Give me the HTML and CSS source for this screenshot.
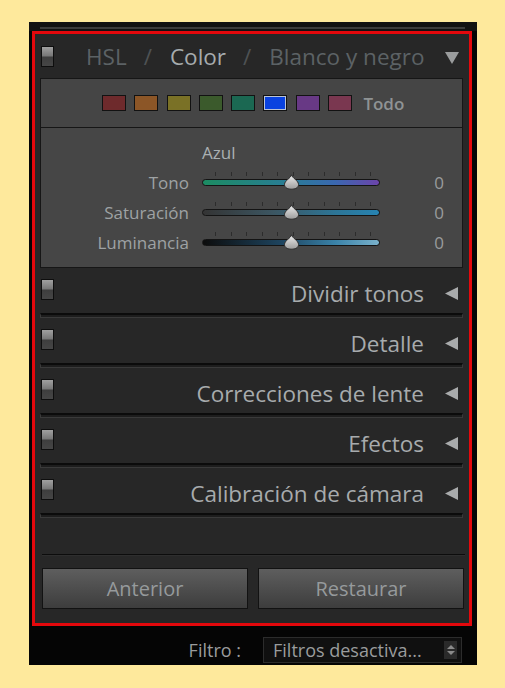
FILE: index.html
```html
<!DOCTYPE html>
<html lang="es">
<head>
<meta charset="utf-8">
<title>Lightroom panel</title>
<link rel="stylesheet" href="styles.css">
</head>
<body>
<div class="app">
  <div class="topstrip"><div class="topline"></div></div>
  <div class="frame">
    <div class="hdr">
      <span class="toggle"></span>
      <div class="titles">
        <span class="dim">HSL</span><span class="slash">/</span><span class="on">Color</span><span class="slash">/</span><span class="dim">Blanco y negro</span>
      </div>
      <svg class="tri-down" width="14" height="13" viewBox="0 0 14 13"><polygon points="0,1 14,1 7,13" fill="#9a9c9d"/></svg>
    </div>

    <div class="swatches">
      <span class="sw" style="background:#6e2a2c"></span>
      <span class="sw" style="background:#8c5627"></span>
      <span class="sw" style="background:#7a7126"></span>
      <span class="sw" style="background:#3b5a2c"></span>
      <span class="sw" style="background:#1b6852"></span>
      <span class="sw sel" style="background:#0a42e0"></span>
      <span class="sw" style="background:#683985"></span>
      <span class="sw" style="background:#7a3750"></span>
      <span class="todo">Todo</span>
    </div>

    <div class="sliders">
      <div class="srow">
        <span class="lbl"></span>
        <span class="color-name">Azul</span>
        <span class="val"></span>
      </div>
      <div class="srow">
        <span class="lbl">Tono</span>
        <div class="track tr-hue">
          <div class="ticks"><i></i><i></i><i></i><i></i><i></i><i></i><i></i><i></i><i></i><i></i><i></i></div>
          <svg class="thumb" width="17" height="16" viewBox="0 0 17 16"><defs><linearGradient id="tg1" x1="0" y1="0" x2="0" y2="1"><stop offset="0" stop-color="#eeeeee"/><stop offset="1" stop-color="#9c9c9c"/></linearGradient></defs><path d="M8.5 0.8 C9.5 4.5 15.5 6.5 15.5 10.5 C15.5 13.8 12.2 15.2 8.5 15.2 C4.8 15.2 1.5 13.8 1.5 10.5 C1.5 6.5 7.5 4.5 8.5 0.8 Z" fill="url(#tg1)" stroke="#2a2a2a" stroke-width="1"/></svg>
        </div>
        <span class="val">0</span>
      </div>
      <div class="srow">
        <span class="lbl">Saturación</span>
        <div class="track tr-sat">
          <div class="ticks"><i></i><i></i><i></i><i></i><i></i><i></i><i></i><i></i><i></i><i></i><i></i></div>
          <svg class="thumb" width="17" height="16" viewBox="0 0 17 16"><path d="M8.5 0.8 C9.5 4.5 15.5 6.5 15.5 10.5 C15.5 13.8 12.2 15.2 8.5 15.2 C4.8 15.2 1.5 13.8 1.5 10.5 C1.5 6.5 7.5 4.5 8.5 0.8 Z" fill="url(#tg1)" stroke="#2a2a2a" stroke-width="1"/></svg>
        </div>
        <span class="val">0</span>
      </div>
      <div class="srow">
        <span class="lbl">Luminancia</span>
        <div class="track tr-lum">
          <div class="ticks"><i></i><i></i><i></i><i></i><i></i><i></i><i></i><i></i><i></i><i></i><i></i></div>
          <svg class="thumb" width="17" height="16" viewBox="0 0 17 16"><path d="M8.5 0.8 C9.5 4.5 15.5 6.5 15.5 10.5 C15.5 13.8 12.2 15.2 8.5 15.2 C4.8 15.2 1.5 13.8 1.5 10.5 C1.5 6.5 7.5 4.5 8.5 0.8 Z" fill="url(#tg1)" stroke="#2a2a2a" stroke-width="1"/></svg>
        </div>
        <span class="val">0</span>
      </div>
    </div>

    <div class="section">
      <div class="sec-hdr"><span class="toggle"></span><span class="sec-title">Dividir tonos</span><svg class="tri-left" width="13" height="13" viewBox="0 0 13 13"><polygon points="13,0 13,13 0,6.5" fill="#a9abac"/></svg></div>
      <div class="bar"></div>
    </div>
    <div class="section">
      <div class="sec-hdr"><span class="toggle"></span><span class="sec-title">Detalle</span><svg class="tri-left" width="13" height="13" viewBox="0 0 13 13"><polygon points="13,0 13,13 0,6.5" fill="#a9abac"/></svg></div>
      <div class="bar"></div>
    </div>
    <div class="section">
      <div class="sec-hdr"><span class="toggle"></span><span class="sec-title">Correcciones de lente</span><svg class="tri-left" width="13" height="13" viewBox="0 0 13 13"><polygon points="13,0 13,13 0,6.5" fill="#a9abac"/></svg></div>
      <div class="bar"></div>
    </div>
    <div class="section">
      <div class="sec-hdr"><span class="toggle"></span><span class="sec-title">Efectos</span><svg class="tri-left" width="13" height="13" viewBox="0 0 13 13"><polygon points="13,0 13,13 0,6.5" fill="#a9abac"/></svg></div>
      <div class="bar"></div>
    </div>
    <div class="section">
      <div class="sec-hdr"><span class="toggle"></span><span class="sec-title">Calibración de cámara</span><svg class="tri-left" width="13" height="13" viewBox="0 0 13 13"><polygon points="13,0 13,13 0,6.5" fill="#a9abac"/></svg></div>
      <div class="bar"></div>
    </div>

    <div class="spacer"></div>
    <div class="sep"></div>
    <div class="buttons">
      <button class="btn">Anterior</button>
      <button class="btn">Restaurar</button>
    </div>
  </div>
  <div class="filterbar">
    <span class="flabel">Filtro :</span>
    <div class="dropdown">
      <span class="dtext">Filtros desactiva...</span>
      <span class="stepper"><svg width="10" height="14" viewBox="0 0 10 14"><polygon points="5,2 9,6 1,6" fill="#8a8a8a"/><polygon points="1,8 9,8 5,12" fill="#8a8a8a"/></svg></span>
    </div>
  </div>
</div>
</body>
</html>
```

FILE: styles.css
```css
* { box-sizing: border-box; }
body {
  margin: 0;
  padding: 22px 0 0 29px;
  background: #fee99c;
  font-family: "Open Sans", "DejaVu Sans", sans-serif;
}
.app {
  width: 448px;
  height: 643px;
  background: #050505;
}
.topstrip {
  height: 9px;
  padding: 5px 12px 0 11px;
  background: #121212;
}
.topline {
  height: 2px;
  background: #3c3c3c;
}
.frame {
  margin-left: 3px;
  width: 440px;
  height: 595px;
  border: 3px solid #e4080c;
  background: #272727;
  display: flex;
  flex-direction: column;
}
.toggle {
  flex: none;
  width: 13px;
  height: 21px;
  border: 1px solid #0e0e0e;
  background: linear-gradient(#a0a0a0 0%, #767676 48%, #3e3e3e 52%, #464646 100%);
}
.hdr {
  height: 44px;
  display: flex;
  align-items: center;
  padding: 0 10px 0 6px;
}
.titles {
  flex: 1;
  display: flex;
  align-items: center;
  font-size: 22.5px;
  padding-left: 32px;
}
.dim { color: #5c6265; }
.on { color: #a6acae; }
.slash { color: #4e5254; margin: 0 18px 0 17px; }
.tri-down { flex: none; margin-top: 2px; }

.swatches {
  margin: 0 6px 0 5px;
  height: 50px;
  border: 1px solid #161616;
  background: #454545;
  display: flex;
  align-items: center;
  padding-left: 61px;
  gap: 8.3px;
}
.sw {
  width: 24px;
  height: 16px;
  border: 1px solid #121212;
}
.sw.sel { box-shadow: inset 0 0 0 1px #b9c3d8; }
.todo {
  color: #8f9394;
  font-size: 17px;
  font-weight: 600;
  margin-left: 3px;
}

.sliders {
  margin: 0 6px 0 5px;
  height: 140px;
  border: 1px solid #161616;
  border-top: none;
  background: #464646;
  padding-top: 9px;
}
.srow {
  height: 30px;
  display: grid;
  grid-template-columns: 148px 178px 1fr;
  column-gap: 13px;
  align-items: center;
}
.lbl {
  text-align: right;
  color: #9ea2a4;
  font-size: 17px;
}
.color-name {
  color: #aab0b2;
  font-size: 17px;
}
.val {
  text-align: right;
  padding-right: 18px;
  color: #9a9c9d;
  font-size: 17px;
}
.track {
  position: relative;
  height: 7px;
  border-radius: 4px;
  border: 1px solid #141414;
  margin-top: 1px;
}
.tr-hue { background: linear-gradient(90deg, #1c8c62, #2a7c98 50%, #3a68b0 75%, #6c44aa); }
.tr-sat { background: linear-gradient(90deg, #343434, #3c5662 40%, #2d7596 75%, #2784b2); }
.tr-lum { background: linear-gradient(90deg, #0c0c0c, #1e4560 45%, #3a82a8 75%, #7ab2cc); }
.ticks {
  position: absolute;
  left: 12px;
  right: 8px;
  top: -8px;
  height: 4px;
  display: flex;
  justify-content: space-between;
}
.ticks i {
  width: 1px;
  height: 4px;
  background: #2c2c2c;
}
.thumb {
  position: absolute;
  left: 80px;
  top: -6px;
}

.section { height: 50px; display: flex; flex-direction: column; }
.sec-hdr {
  height: 45px;
  display: flex;
  align-items: center;
  padding: 2px 11px 0 6px;
}
.sec-title {
  flex: 1;
  text-align: right;
  color: #a7abad;
  font-size: 22.5px;
  margin-right: 21px;
  margin-top: 3px;
}
.sec-hdr .toggle { margin-top: -4px; }
.tri-left { flex: none; margin-top: 4px; }
.bar {
  margin: 0 6px 0 5px;
  height: 5px;
  border: 1px solid #3a3a3a;
  border-top: 2px solid #0b0b0b;
  background: #1d1d1d;
}

.spacer { height: 36px; }
.sep {
  margin: 0 4px 0 7px;
  height: 2px;
  border-top: 1px solid #0c0c0c;
  border-bottom: 1px solid #2e2e2e;
}
.buttons {
  flex: 1;
  display: flex;
  gap: 10px;
  padding: 12px 5px 0 7px;
  height: 41px;
}
.btn {
  flex: 1;
  height: 41px;
  border: 1px solid #121212;
  background: linear-gradient(#5e5e5e, #3d3d3d);
  color: #969a9c;
  font-family: "Open Sans", "DejaVu Sans", sans-serif;
  font-size: 20px;
  padding: 0;
}

.filterbar {
  height: 39px;
  display: flex;
  align-items: center;
  justify-content: flex-end;
  padding: 8px 15px 0 0;
}
.flabel {
  color: #9a9c9d;
  font-size: 18px;
  margin-right: 22px;
}
.dropdown {
  width: 199px;
  height: 26px;
  border: 1px solid #2c2c2c;
  background: #101010;
  display: flex;
  align-items: center;
  padding-left: 9px;
  padding-right: 4px;
}
.dtext {
  flex: 1;
  color: #9a9c9d;
  font-size: 18px;
  white-space: nowrap;
}
.stepper {
  width: 13px;
  height: 18px;
  background: #2a2a2a;
  display: flex;
  align-items: center;
  justify-content: center;
}
```
